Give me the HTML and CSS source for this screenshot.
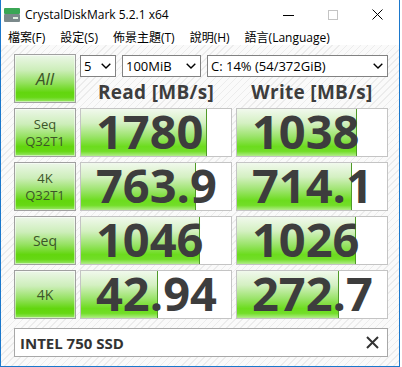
FILE: index.html
```html
<!DOCTYPE html>
<html lang="zh-Hant">
<head>
    <meta charset="UTF-8">
    <title>CrystalDiskMark 5.2.1 x64</title>
    <link rel="stylesheet" href="styles.css">
</head>
<body>
    <div class="window">
        <div class="titlebar">
            <svg class="app-icon" width="16" height="14" viewBox="0 0 16 14">
                <rect x="0" y="0" width="16" height="6" rx="1" fill="#3aa655"/>
                <rect x="0" y="6" width="16" height="8" rx="1" fill="#7b898b"/>
                <rect x="9" y="9" width="5" height="2" fill="#dfeee0"/>
            </svg>
            <span class="title">CrystalDiskMark 5.2.1 x64</span>
            <div class="caption">
                <svg width="11" height="10" viewBox="0 0 11 10"><path d="M0 5.5H11" stroke="#000" stroke-width="1"/></svg>
                <svg width="10" height="10" viewBox="0 0 10 10"><rect x="0.5" y="0.5" width="9" height="9" fill="none" stroke="#c4c4c4"/></svg>
                <svg width="11" height="11" viewBox="0 0 11 11"><path d="M0.5 0.5L10.5 10.5M10.5 0.5L0.5 10.5" stroke="#000" stroke-width="1"/></svg>
            </div>
        </div>
        <div class="menubar">
            <span>檔案(F)</span>
            <span>設定(S)</span>
            <span>佈景主題(T)</span>
            <span>說明(H)</span>
            <span>語言(Language)</span>
        </div>
        <div class="main">
            <div class="board">
                <div class="label all">All</div>
                <div class="top">
                    <div class="controls">
                        <div class="select count"><span>5</span><svg width="10" height="6" viewBox="0 0 10 6"><path d="M0.7 0.7L5 5L9.3 0.7" fill="none" stroke="#000" stroke-width="1.4"/></svg></div>
                        <div class="select size"><span>100MiB</span><svg width="10" height="6" viewBox="0 0 10 6"><path d="M0.7 0.7L5 5L9.3 0.7" fill="none" stroke="#000" stroke-width="1.4"/></svg></div>
                        <div class="select drive"><span>C: 14% (54/372GiB)</span><svg width="10" height="6" viewBox="0 0 10 6"><path d="M0.7 0.7L5 5L9.3 0.7" fill="none" stroke="#000" stroke-width="1.4"/></svg></div>
                    </div>
                    <div class="heads">
                        <div class="head">Read [MB/s]</div>
                        <div class="head">Write [MB/s]</div>
                    </div>
                </div>

                <div class="label">Seq<br>Q32T1</div>
                <div class="result"><div class="fill" style="width: 84%"></div><div class="value">1780</div></div>
                <div class="result"><div class="fill" style="width: 80%"></div><div class="value">1038</div></div>

                <div class="label">4K<br>Q32T1</div>
                <div class="result"><div class="fill" style="width: 76.7%"></div><div class="value">763.9</div></div>
                <div class="result"><div class="fill" style="width: 76.7%"></div><div class="value">714.1</div></div>

                <div class="label single">Seq</div>
                <div class="result"><div class="fill" style="width: 79.3%"></div><div class="value">1046</div></div>
                <div class="result"><div class="fill" style="width: 79.3%"></div><div class="value">1026</div></div>

                <div class="label single">4K</div>
                <div class="result"><div class="fill" style="width: 51.3%"></div><div class="value">42.94</div></div>
                <div class="result"><div class="fill" style="width: 68%"></div><div class="value">272.7</div></div>
            </div>

            <div class="comment">
                <span>INTEL 750 SSD</span>
                <svg width="13" height="13" viewBox="0 0 13 13"><path d="M1 1L12 12M12 1L1 12" stroke="#333" stroke-width="2"/></svg>
            </div>
        </div>
    </div>
</body>
</html>
```
FILE: styles.css
```css
body {
    margin: 0;
    background-color: #fff;
    font-family: "Open Sans", "Noto Sans CJK TC", sans-serif;
}

.window {
    width: 398px;
    height: 366px;
    border: 1px solid #1b78cc;
    border-top: none;
    display: flex;
    flex-direction: column;
}

.titlebar {
    height: 29px;
    display: flex;
    align-items: center;
    background-color: #fff;
}

.app-icon {
    margin-left: 3px;
}

.title {
    margin-left: 5px;
    font-size: 12px;
    color: #000;
}

.caption {
    margin-left: auto;
    margin-right: 16px;
    display: flex;
    align-items: center;
    gap: 34px;
}

.menubar {
    height: 16px;
    display: flex;
    align-items: center;
    gap: 15px;
    padding-left: 7px;
    font-size: 12px;
    color: #000;
    background-color: #fff;
}

.main {
    flex: 1;
    padding: 9px 11px 0 13px;
    background: repeating-linear-gradient(135deg, #fafafa 0 4px, #ececec 4px 5px);
}

.board {
    display: grid;
    grid-template-columns: 62px 152px 152px;
    grid-auto-rows: 49px;
    column-gap: 4px;
    row-gap: 5px;
}

.label {
    box-sizing: border-box;
    border: 1px solid #a0a0a0;
    box-shadow: inset 0 0 0 1px rgba(255, 255, 255, 0.5);
    background: linear-gradient(#ecf7e8 0%, #cdeeba 32%, #97e264 58%, #62d60e 80%, #66d814 90%, #9be66c 100%);
    display: flex;
    align-items: center;
    justify-content: center;
    text-align: center;
    font-size: 13px;
    line-height: 17px;
    color: #3c5529;
}

.label.all {
    font-size: 17px;
    font-style: italic;
}

.label.single {
    font-size: 14px;
}

.top {
    grid-column: 2 / 4;
    display: flex;
    flex-direction: column;
}

.controls {
    display: flex;
    gap: 6px;
    height: 22px;
    margin-top: 1px;
}

.select {
    box-sizing: border-box;
    border: 1px solid #828282;
    background-color: #fff;
    display: flex;
    align-items: center;
    justify-content: space-between;
    padding: 0 4px 0 3px;
    font-size: 13px;
    color: #000;
}

.select.count { width: 36px; }
.select.size { width: 79px; }
.select.drive { width: 181px; }

.heads {
    flex: 1;
    display: grid;
    grid-template-columns: 152px 152px;
    column-gap: 4px;
    align-items: end;
}

.head {
    text-align: center;
    font-weight: 700;
    font-size: 19px;
    letter-spacing: 0.3px;
    line-height: 22px;
    color: #3d3d3d;
}

.result {
    box-sizing: border-box;
    border: 1px solid #c4c4c4;
    background-color: #fff;
    display: grid;
}

.result > div {
    grid-area: 1 / 1;
}

.fill {
    height: 100%;
    background: linear-gradient(#f1f9ed 0%, #d4f0c2 30%, #9ce46c 58%, #6cdc1e 80%, #72de28 90%, #b2ec8a 100%);
    box-shadow: inset -1px 0 #4f9a27;
}

.value {
    align-self: center;
    padding-left: 15px;
    margin-top: -3px;
    font-size: 47px;
    font-weight: 700;
    line-height: 44px;
    color: #3d3d3d;
}

.comment {
    box-sizing: border-box;
    margin-top: 9px;
    height: 29px;
    border: 1px solid #a8a8a8;
    background-color: #fff;
    display: flex;
    align-items: center;
    justify-content: space-between;
    padding: 0 8px 0 5px;
    font-size: 15px;
    font-weight: 700;
    color: #333;
}
```
